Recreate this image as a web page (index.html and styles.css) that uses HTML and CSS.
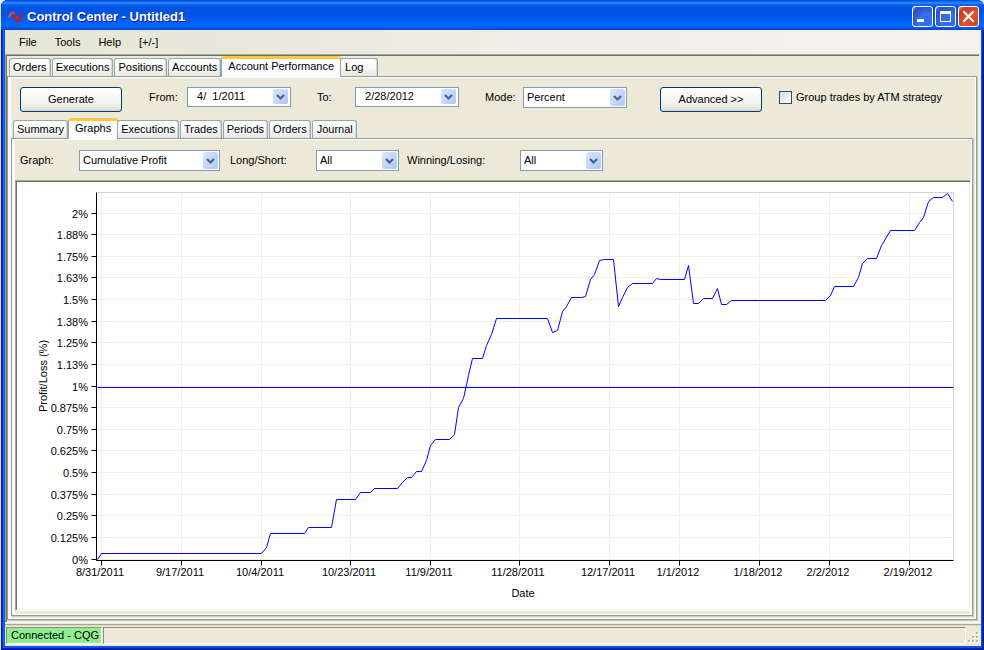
FILE: index.html
```html
<!DOCTYPE html>
<html lang="en">
<head>
    <meta charset="UTF-8">
    <meta name="viewport" content="width=device-width, initial-scale=1.0">
    <title>Control Center - Untitled1</title>
    <link rel="stylesheet" href="styles.css">
</head>
<body>
    <div class="window">
        <header class="titlebar">
            <svg class="app-icon" viewBox="0 0 16 16" aria-hidden="true">
                <path d="M1 9 C2 3 5 2 7 7 L9 11" fill="none" stroke="#8d5a78" stroke-width="3"/>
                <path d="M6 5 C8 12 10 14 12 10 C13 8 13 6 14 5" fill="none" stroke="#b3222c" stroke-width="3"/>
            </svg>
            <h1>Control Center - Untitled1</h1>
            <div class="window-buttons">
                <button type="button" class="win-btn" aria-label="Minimize">
                    <svg viewBox="0 0 19 19"><rect x="4" y="12" width="7" height="3" fill="#fff"/></svg>
                </button>
                <button type="button" class="win-btn" aria-label="Maximize">
                    <svg viewBox="0 0 19 19"><path d="M4 4h11v11H4z M5 7v7h9V7z" fill="#fff" fill-rule="evenodd"/></svg>
                </button>
                <button type="button" class="win-btn close" aria-label="Close">
                    <svg viewBox="0 0 19 19"><path d="M5 5l9 9M14 5l-9 9" stroke="#fff" stroke-width="2" stroke-linecap="square"/></svg>
                </button>
            </div>
        </header>

        <nav class="menubar">
            <a href="#">File</a>
            <a href="#">Tools</a>
            <a href="#">Help</a>
            <a href="#">[+/-]</a>
        </nav>

        <main class="workspace">
            <div class="tabs" role="tablist">
                <button type="button" class="tab" role="tab">Orders</button>
                <button type="button" class="tab" role="tab">Executions</button>
                <button type="button" class="tab" role="tab">Positions</button>
                <button type="button" class="tab" role="tab">Accounts</button>
                <button type="button" class="tab active" role="tab" aria-selected="true">Account Performance</button>
                <button type="button" class="tab" role="tab">Log</button>
            </div>

            <section class="panel">
                <form class="toolbar">
                    <button type="button" class="btn">Generate</button>
                    <label for="from" class="label-from">From:</label>
                    <div class="date-field">
                        <input type="text" id="from" value=" 4/  1/2011">
                        <button type="button" class="drop" aria-label="Open from calendar"></button>
                    </div>
                    <label for="to" class="label-to">To:</label>
                    <div class="date-field">
                        <input type="text" id="to" value=" 2/28/2012">
                        <button type="button" class="drop" aria-label="Open to calendar"></button>
                    </div>
                    <label for="mode" class="label-mode">Mode:</label>
                    <select id="mode" class="select-mode">
                        <option>Percent</option>
                    </select>
                    <button type="button" class="btn btn-advanced">Advanced &gt;&gt;</button>
                    <input type="checkbox" id="group" class="check">
                    <label for="group">Group trades by ATM strategy</label>
                </form>

                <div class="tabs" role="tablist">
                    <button type="button" class="tab" role="tab">Summary</button>
                    <button type="button" class="tab active" role="tab" aria-selected="true">Graphs</button>
                    <button type="button" class="tab" role="tab">Executions</button>
                    <button type="button" class="tab" role="tab">Trades</button>
                    <button type="button" class="tab" role="tab">Periods</button>
                    <button type="button" class="tab" role="tab">Orders</button>
                    <button type="button" class="tab" role="tab">Journal</button>
                </div>

                <section class="panel inner">
                    <form class="filters">
                        <label for="graph" class="label-graph">Graph:</label>
                        <select id="graph" class="select-graph">
                            <option>Cumulative Profit</option>
                        </select>
                        <label for="side" class="label-side">Long/Short:</label>
                        <select id="side" class="select-small">
                            <option>All</option>
                        </select>
                        <label for="result" class="label-result">Winning/Losing:</label>
                        <select id="result" class="select-small">
                            <option>All</option>
                        </select>
                    </form>

                    <div class="chart">
                        <svg id="chart" viewBox="17 182 952 427" role="img" aria-label="Cumulative profit">
                            <g transform="translate(0.5 0.5)">
                                <g id="grid" class="grid"></g>
                                <path class="frame" d="M96 192H953V560"/>
                                <path class="profit" d="M97 387H953"/>
                                <polyline class="profit" points="97,559 101,553 261,553 266,547 270,533 304,533 308,527 331,527
                                    336,499 355,499 360,492 370,492 374,488 397,488 402,482 407,477 411,477 416,471 421,471
                                    426,460 430,445 435,439 449,439 454,434 458,407 463,398 468,375 472,358 482,358 486,345
                                    491,334 496,318 547,318 552,332 557,330 562,311 566,306 571,297 581,297 585,296 590,279
                                    594,274 599,260 604,259 613,259 618,306 622,297 627,287 632,283 652,283 656,278 660,279
                                    684,279 688,265 693,303 698,303 703,298 712,298 717,288 721,304 726,304 731,300 825,300
                                    830,295 834,286 853,286 858,277 862,263 867,258 876,258 881,245 890,230 914,230 919,222
                                    923,217 928,201 933,197 942,197 947,193 952,201"/>
                                <path class="axis" d="M96 192V560H953"/>
                                <g id="ticks" class="axis"></g>
                            </g>
                            <g id="labels"></g>
                            <text x="523" y="597" text-anchor="middle">Date</text>
                            <text transform="translate(47 376) rotate(-90)" text-anchor="middle">Profit/Loss (%)</text>
                        </svg>
                    </div>
                </section>
            </section>
        </main>

        <footer class="statusbar">
            <span class="cell connected">Connected - CQG</span>
            <span class="cell message"></span>
            <svg class="grip" viewBox="0 0 13 13" aria-hidden="true">
                <path d="M9 1h2v2h-2z M5 5h2v2h-2z M9 5h2v2h-2z M1 9h2v2h-2z M5 9h2v2h-2z M9 9h2v2h-2z" fill="#fff" transform="translate(1 1)"/>
                <path d="M9 1h2v2h-2z M5 5h2v2h-2z M9 5h2v2h-2z M1 9h2v2h-2z M5 9h2v2h-2z M9 9h2v2h-2z" fill="#b8b4a2"/>
            </svg>
        </footer>
    </div>

    <script>
        const yTicks = [
            [213, '2%'], [234, '1.88%'], [256, '1.75%'], [277, '1.63%'], [299, '1.5%'], [321, '1.38%'],
            [342, '1.25%'], [364, '1.13%'], [386, '1%'], [407, '0.875%'], [429, '0.75%'], [450, '0.625%'],
            [472, '0.5%'], [494, '0.375%'], [515, '0.25%'], [537, '0.125%'], [559, '0%']
        ];
        const xTicks = [
            [101, '8/31/2011'], [181, '9/17/2011'], [261, '10/4/2011'], [350, '10/23/2011'],
            [430, '11/9/2011'], [519, '11/28/2011'], [609, '12/17/2011'], [679, '1/1/2012'],
            [759, '1/18/2012'], [829, '2/2/2012'], [909, '2/19/2012']
        ];

        function add(parent, tag, attrs, text) {
            const el = document.createElementNS('http://www.w3.org/2000/svg', tag);
            for (const key in attrs) {
                el.setAttribute(key, attrs[key]);
            }
            if (text) {
                el.textContent = text;
            }
            document.getElementById(parent).appendChild(el);
        }

        yTicks.forEach(([y, text]) => {
            add('grid', 'path', { d: `M97 ${y}H953` });
            add('ticks', 'path', { d: `M91 ${y}H96` });
            add('labels', 'text', { x: 88, y: y + 5, 'text-anchor': 'end' }, text);
        });

        xTicks.forEach(([x, text]) => {
            add('grid', 'path', { d: `M${x} 192V560` });
            add('ticks', 'path', { d: `M${x} 560V565` });
            add('labels', 'text', { x: x - 1, y: 576, 'text-anchor': 'middle' }, text);
        });
    </script>
</body>
</html>
```
FILE: styles.css
```css
* {
    margin: 0;
    padding: 0;
    box-sizing: border-box;
}

body {
    font-family: "Liberation Sans", Arial, sans-serif;
    font-size: 11px;
    line-height: 13px;
    color: #000;
    background: #dfe6ee;
}

button,
input,
select {
    font: inherit;
    color: inherit;
}

.window {
    display: flex;
    flex-direction: column;
    min-height: 100vh;
    margin-left: 1px;
    padding: 0 3px 4px 4px;
    border-radius: 7px 7px 0 0;
    background: #0855dd;
    box-shadow: inset 1px 0 #0019cf, inset -1px -1px #00138c, inset 2px 0 #0831d9, inset -2px -2px #0029c8, inset 3px 0 #166aee;
}

/* Title bar */
.titlebar {
    display: flex;
    align-items: center;
    height: 30px;
    margin: 0 -3px 0 -4px;
    padding: 3px 5px 0 7px;
    border-radius: 7px 7px 0 0;
    background: linear-gradient(#0046c8 0, #0a5be8 1px, #2a8cff 3px, #0560ea 5px, #0053e1 9px, #0054e6 15px, #0063fb 22px, #0066ff 26px, #005ae8 28px, #0040c4 30px);
}

.app-icon {
    width: 16px;
    height: 16px;
}

.titlebar h1 {
    flex: 1;
    margin-left: 3px;
    font-size: 13px;
    line-height: 16px;
    color: #fff;
    text-shadow: 1px 1px #0f1089;
}

.window-buttons {
    display: flex;
    gap: 2px;
}

.win-btn {
    width: 21px;
    height: 21px;
    border: 1px solid #fff;
    border-radius: 3px;
    background: radial-gradient(circle at 80% 85%, #2f6cf5, #3b6ee8 40%, #2450cf 80%, #6a8fee);
}

.win-btn.close {
    background: radial-gradient(circle at 80% 85%, #d8401a, #e0532f 45%, #c93c1c 80%, #ee9b84);
}

.win-btn svg {
    display: block;
    width: 19px;
    height: 19px;
}

/* Menu */
.menubar {
    display: flex;
    align-items: center;
    gap: 18px;
    height: 24px;
    padding-left: 14px;
    background: linear-gradient(90deg, #e5e5d7, #f4f1ec 80%);
}

.menubar a {
    color: #000;
    text-decoration: none;
}

.workspace {
    flex: 1;
    display: flex;
    flex-direction: column;
    margin-right: 1px;
    padding: 1px 2px 2px 1px;
    border: 1px solid #aca899;
    border-right-color: #fff;
    border-bottom-color: #fff;
    background: #ece9d8;
    box-shadow: inset 1px 1px #716f64, 1px 0 #ece9d8;
}

/* Tabs */
.tabs {
    display: flex;
    align-items: flex-end;
    height: 20px;
    padding-left: 2px;
}

.tab {
    height: 18px;
    margin-right: 1px;
    padding: 0 3px;
    border: 1px solid #91a7b4;
    border-bottom: 0;
    border-radius: 3px 3px 0 0;
    background: linear-gradient(#fff, #f6f6f2 60%, #e8e7df);
    box-shadow: inset -1px 0 #d8d7cc;
    white-space: nowrap;
}

.tab:last-child {
    min-width: 38px;
    padding-left: 4px;
    text-align: left;
}

.tab.active {
    z-index: 1;
    height: 21px;
    margin: 0 -1px -1px -1px;
    padding: 0 6px 3px;
    border-top: 3px solid #ffc73c;
    background: #fcfcfe;
    box-shadow: none;
}

.panel {
    flex: 1;
    display: flex;
    flex-direction: column;
    padding: 0 3px 3px;
    border: 1px solid #919b9c;
    background: #ece9d8;
    box-shadow: inset 3px 1px #fcfcfe, inset -1px -1px #fff, 1px 1px #d0cebf;
}

.panel.inner {
    padding: 0 1px 4px 3px;
}

/* Form controls */
.toolbar,
.filters {
    display: flex;
    align-items: center;
    height: 41px;
}

.toolbar {
    padding-left: 9px;
}

.filters {
    padding-left: 5px;
    padding-top: 2px;
}

.btn {
    width: 102px;
    height: 25px;
    margin-top: 4px;
    border: 1px solid #003c74;
    border-radius: 3px;
    background: linear-gradient(#fff, #f4f4f0 60%, #e6e5dc 90%, #d6d0c5);
}

.btn-advanced {
    margin-left: 33px;
    margin-right: 17px;
}

.label-from {
    width: 38px;
    margin-left: 27px;
}

.label-to {
    width: 38px;
    margin-left: 26px;
}

.label-mode {
    width: 38px;
    margin-left: 26px;
}

.label-graph {
    width: 59px;
}

.label-side {
    width: 86px;
    margin-left: 10px;
}

.label-result {
    width: 113px;
    margin-left: 8px;
}

.date-field {
    display: flex;
    align-items: center;
    width: 104px;
    height: 20px;
    margin-bottom: 2px;
    padding-right: 2px;
    border: 1px solid #7f9db9;
    background: #fff;
}

.date-field input {
    flex: 1;
    min-width: 0;
    padding-left: 6px;
    border: 0;
    background: none;
    outline: none;
}

.drop {
    width: 15px;
    height: 15px;
    border: 0;
    border-radius: 2px;
}

.drop,
select {
    background-image: url("data:image/svg+xml,%3Csvg xmlns='http://www.w3.org/2000/svg' width='15' height='17'%3E%3Cdefs%3E%3ClinearGradient id='g' x2='1' y2='1'%3E%3Cstop stop-color='%23dbe5fe'/%3E%3Cstop offset='1' stop-color='%23aec8f7'/%3E%3C/linearGradient%3E%3C/defs%3E%3Crect width='15' height='17' rx='2' fill='url(%23g)'/%3E%3Cpath d='M4 7l3.500 3.500L11 7' fill='none' stroke='%234d6185' stroke-width='2.200'/%3E%3C/svg%3E");
    background-repeat: no-repeat;
    background-position: center;
}

select {
    appearance: none;
    height: 21px;
    padding: 0 18px 0 3px;
    border: 1px solid #7f9db9;
    border-radius: 0;
    background-color: #fff;
    background-position: right 1px center;
}

.select-mode {
    width: 104px;
}

.select-graph {
    width: 141px;
}

.select-small {
    width: 83px;
}

.check {
    appearance: none;
    width: 13px;
    height: 13px;
    margin-right: 4px;
    border: 1px solid #1c5180;
    background: linear-gradient(135deg, #dcdcd7, #fff);
}

/* Chart */
.chart {
    flex: 1;
    min-height: 0;
    padding: 1px;
    border: 1px solid #aca899;
    border-right-color: #fff;
    border-bottom-color: #fff;
    background: #fff;
    box-shadow: inset 1px 1px #716f64, inset -1px -1px #f1efe2;
}

.chart svg {
    display: block;
    width: 100%;
    height: 100%;
}

.chart path,
.chart polyline {
    fill: none;
}

.grid {
    stroke: #efefe2;
}

.frame {
    stroke: #d3d3d3;
}

.axis {
    stroke: #000;
}

.profit {
    stroke: #0000ff;
}

/* Status bar */
.statusbar {
    display: flex;
    align-items: stretch;
    gap: 1px;
    height: 23px;
    padding: 3px 1px 2px;
    border-top: 1px solid #ece9d8;
    background: #ece9d8;
    box-shadow: inset 0 1px #aca899, inset 0 2px #dcd8c6;
}

.cell {
    height: 17px;
    padding: 1px 2px 1px 4px;
    border: 1px solid #8f8c7e;
    border-right-color: #fff;
    border-bottom-color: #fff;
}

.connected {
    background: #90ee90;
}

.message {
    flex: 1;
}

.grip {
    width: 13px;
    height: 13px;
    align-self: flex-end;
}
```
